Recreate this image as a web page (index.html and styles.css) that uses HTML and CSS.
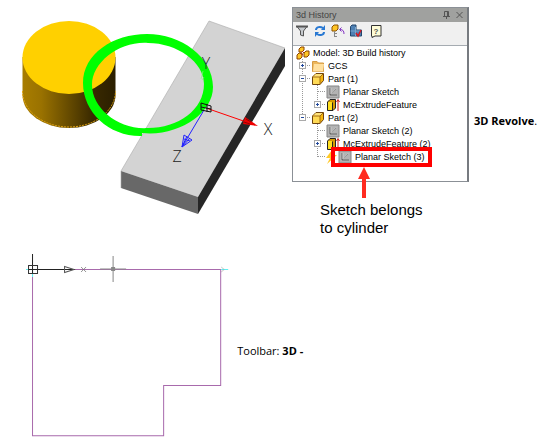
FILE: index.html
```html
<!DOCTYPE html>
<html lang="en">
<head>
    <meta charset="UTF-8">
    <meta name="viewport" content="width=device-width, initial-scale=1.0">
    <title>3D Revolve</title>

    <link rel="stylesheet" href="styles.css">
</head>
<body>
    <!-- shared icons -->
    <svg class="defs" aria-hidden="true">
        <symbol id="icon-part" viewBox="0 0 14 14">
            <path d="M1.500 5 5 1.500H12.500V8.500L9 12.500H1.500Z" fill="#f5b50c" stroke="#6e4310"/>
            <path d="M2 5 5 2H12L9 5Z" fill="#ffe27a"/>
            <path d="M2 5H9V12H2Z" fill="#ffda55"/>
            <path d="M1.500 5H9V12.500M9 5 12.500 1.500" fill="none" stroke="#a36d12"/>
        </symbol>
        <symbol id="icon-sketch" viewBox="0 0 14 14">
            <path d="M1 1H13V13H1Z" fill="#b3b3b3" stroke="#858585"/>
            <path d="M4 3V10H11M4 10 10 4" fill="none" stroke="#666"/>
            <path d="M5 3V9L10 3.500" fill="none" stroke="#ddd" stroke-width=".6"/>
        </symbol>
        <symbol id="icon-extrude" viewBox="0 0 14 14">
            <path d="M1.500 4 4 1.500H9.500V10L7 12.500H1.500Z" fill="#d79b00" stroke="#222"/>
            <path d="M2 4H6V12H2Z" fill="#ffdf20"/>
            <path d="M6.500 4.500V12" stroke="#222"/>
            <path d="M12 13V2M10.500 4 12 1.500 13.500 4" fill="none" stroke="#c22"/>
        </symbol>
    </svg>

    <main>
        <section class="history">
            <svg class="scene" viewBox="0 0 292 220" role="img" aria-label="Cylinder, sketch circle and plate">
                <defs>
                    <linearGradient id="side">
                        <stop offset="0" stop-color="#a87d00"/>
                        <stop offset=".2" stop-color="#9a7200"/>
                        <stop offset=".75" stop-color="#3a2a00"/>
                        <stop offset="1" stop-color="#2b1f00"/>
                    </linearGradient>
                </defs>

                <path d="M22.500 57V95A46.500 33 0 0 0 115.500 95V57Z" fill="url(#side)"/>
                <path d="M22.500 91A46.500 36 0 0 0 115.500 91" fill="none" stroke="#e3a512" stroke-dasharray="2 1"/>
                <ellipse cx="69" cy="57.500" rx="46.500" ry="36.500" fill="#ffd000"/>

                <path d="M209 21 285 48 198 197 121 171Z" fill="#d3d3d3"/>
                <path d="M285 48V66L198 214V197Z" fill="#262626"/>
                <path d="M121 171 198 197V214L121 188Z" fill="#686868"/>
                <path d="M121 188V171L209 21 285 48" fill="none" stroke="#aaa" stroke-width=".6"/>

                <path fill-rule="evenodd" fill="#0f0" d="M147 34C181 34 213 57 213 87C213 112 183 133 150 133.500L142 133V136C110 137 83 113 83 83C83 54 113 34 147 34ZM148 43C120 41 92 62 92 85C92 108 118 130 148 128C178 128 204 110 204 84C204 62 177 43 148 43Z"/>
                <path d="M204 77 202 80M203 71 201 79" stroke="#7ff57f" stroke-width=".7"/>

                <text class="axis" x="206" y="69" text-anchor="middle">Y</text>
                <text class="axis" x="268" y="135" text-anchor="middle">X</text>
                <text class="axis" x="177" y="162" text-anchor="middle">Z</text>

                <path d="M206 108 255 125" stroke="#f00"/>
                <path d="M245 117 258 126 243 124Z" fill="#e00"/>
                <path d="M246 119 251 122M244 122 250 124" stroke="#500" stroke-width=".6"/>
                <path d="M204 110 182 147M182 147 184 135 192 140ZM182 147 187 136M182 147 190 138M184 139 190 141" fill="none" stroke="#22f"/>
                <path d="M201 103 211 106V112L201 110ZM207 104V112M201 107 211 109" fill="none" stroke="#111"/>
            </svg>

            <figure>
                <div class="panel">
                    <header class="titlebar">
                        <h1>3d History</h1>
                        <button class="window-button" aria-label="Pin">
                            <svg viewBox="0 0 7 8"><path d="M1.500 5V.5H5.500V5M4.500 0V5M0 5.500H7M3.500 5V8" fill="none" stroke="#555"/></svg>
                        </button>
                        <button class="window-button" aria-label="Close">
                            <svg viewBox="0 0 7 8"><path d="M.5 1 6.500 7M6.500 1 .5 7" fill="none" stroke="#555"/></svg>
                        </button>
                    </header>

                    <div class="toolbar">
                        <button aria-label="Filter">
                            <svg viewBox="0 0 14 14"><path d="M2 2.500H12L8.500 7V12L5.500 11V7Z" fill="#c5c9cd" stroke="#555"/><path d="M1 2.500H13" stroke="#555" stroke-width="2"/></svg>
                        </button>
                        <button aria-label="Refresh">
                            <svg viewBox="0 0 14 14"><path d="M3 6C3 3 7 2 10 4M11 8C11 11 7 12 4 10" fill="none" stroke="#2878d2" stroke-width="2"/><path d="M8 6H12V1ZM6 8H2V13Z" fill="#2878d2"/></svg>
                        </button>
                        <button aria-label="Roll back">
                            <svg viewBox="0 0 14 14"><path d="M1 3 3 1H7V5L5 7H1Z" fill="#ffc526" stroke="#8c5200"/><path d="M3.500 7V13M3.500 9.500H6M3.500 12.500H6" fill="none" stroke="#888"/><path d="M13 10C13 7 12 5.500 9 5.500M10.500 3.500 8.500 5.500 10.500 7.500" fill="none" stroke="#8434c4"/></svg>
                        </button>
                        <button aria-label="Rebuild">
                            <svg viewBox="0 0 14 14"><path d="M1.500 2.500 3 1H7V6H12.500V12H1.500Z" fill="#4f81b4" stroke="#23466d"/><path d="M1.500 7H12M6.500 3V12" stroke="#7ba7cf"/><path d="M7 9 9 12 12 6" fill="none" stroke="#d71920" stroke-width="1.500"/></svg>
                        </button>
                        <button class="help" aria-label="Help">
                            <svg viewBox="0 0 14 14"><path d="M2.500 1.500H12V12H6L3 13.500V12H2.500Z" fill="#fffdd7" stroke="#333"/><text class="question" x="7" y="10" text-anchor="middle">?</text></svg>
                        </button>
                    </div>

                    <div class="tree">
                        <div class="row">
                            <svg class="icon" viewBox="0 0 14 14"><path d="M3 3 5 1H8V4L6 6H3ZM1 9 3 7H6V11L4 13H1ZM8 7 10 5H13V9L11 11H8Z" fill="#ffc727" stroke="#8b4200"/><path d="M6 5 8 7M4 7 7 9" stroke="#b32b16"/></svg>
                            <span>Model: 3D Build history</span>
                        </div>
                        <ul class="branches">
                            <li>
                                <div class="row">
                                    <span class="branch"><button class="toggle plus" aria-label="Expand GCS"></button></span>
                                    <svg class="icon" viewBox="0 0 14 14"><path d="M1.500 2.500H6L7.500 4H12.500V12.500H1.500Z" fill="#edb75c" stroke="#d59a42"/><path d="M3 5H13L12 12.500H2Z" fill="#ffe0a0"/></svg>
                                    <span>GCS</span>
                                </div>
                            </li>
                            <li>
                                <div class="row">
                                    <span class="branch"><button class="toggle" aria-label="Collapse Part (1)"></button></span>
                                    <svg class="icon"><use href="#icon-part"/></svg>
                                    <span>Part (1)</span>
                                </div>
                                <ul>
                                    <li class="row">
                                        <span class="branch leaf"></span>
                                        <svg class="icon"><use href="#icon-sketch"/></svg>
                                        <span>Planar Sketch</span>
                                    </li>
                                    <li class="row">
                                        <span class="branch"><button class="toggle plus" aria-label="Expand McExtrudeFeature"></button></span>
                                        <svg class="icon"><use href="#icon-extrude"/></svg>
                                        <span>McExtrudeFeature</span>
                                    </li>
                                </ul>
                            </li>
                            <li>
                                <div class="row">
                                    <span class="branch"><button class="toggle" aria-label="Collapse Part (2)"></button></span>
                                    <svg class="icon"><use href="#icon-part"/></svg>
                                    <span>Part (2)</span>
                                </div>
                                <ul>
                                    <li class="row">
                                        <span class="branch leaf"></span>
                                        <svg class="icon"><use href="#icon-sketch"/></svg>
                                        <span>Planar Sketch (2)</span>
                                    </li>
                                    <li class="row">
                                        <span class="branch"><button class="toggle plus" aria-label="Expand McExtrudeFeature (2)"></button></span>
                                        <svg class="icon"><use href="#icon-extrude"/></svg>
                                        <span>McExtrudeFeature (2)</span>
                                    </li>
                                    <li class="row">
                                        <span class="branch leaf"></span>
                                        <svg class="bolt" viewBox="0 0 12 14"><path d="M6 0 0 8H4L1 14 11 5H7L10 0Z" fill="#ffc928"/></svg>
                                        <span class="marked">
                                            <svg class="icon"><use href="#icon-sketch"/></svg>
                                            <span>Planar Sketch (3)</span>
                                            <svg class="arrow" viewBox="0 0 12 31"><path d="M6 0 12 12H8V31H4V12H0Z" fill="#ff2b20"/></svg>
                                        </span>
                                    </li>
                                </ul>
                            </li>
                        </ul>
                    </div>
                </div>
                <figcaption>Sketch belongs<br>to cylinder</figcaption>
            </figure>

            <p class="command"><b>3D Revolve</b>.</p>
        </section>

        <section class="profile">
            <svg class="sketch" viewBox="0 0 235 187" role="img" aria-label="Profile sketch">
                <path d="M32.500 15.500H220.500V131.500H163.500V181.500H32.500Z" fill="none" stroke="#a86aac"/>
                <path d="M26 15.500H33M32.500 15V23M221 15.500H228" stroke="#5ff0f0"/>
                <path d="M32.500 0V19M28 15.500H75" stroke="#222"/>
                <path d="M28.500 11.500H37.500V19.500H28.500Z" fill="none" stroke="#333"/>
                <path d="M64.500 12.500 74 15.500 64.500 18.500Z" fill="none" stroke="#555"/>
                <path d="M81 13 86 18M86 13 81 18" stroke="#777" stroke-width=".8"/>
                <path d="M113 2V28M100 15H126" stroke="#888"/>
                <path d="M111 13H115V17H111Z" fill="#888"/>
                <path d="M221 13 224 15.500 221 18" fill="none" stroke="#aaa" stroke-width=".7"/>
            </svg>
            <p>Toolbar: <b>3D -</b></p>
        </section>
    </main>
</body>
</html>
```

FILE: styles.css
```css
* {
    box-sizing: border-box;
}

body {
    margin: 0;
    background: #fff;
    color: #000;
    font-family: "Open Sans", sans-serif;
    font-size: 11px;
}

h1, p, ul, figure {
    margin: 0;
    padding: 0;
}

ul {
    list-style: none;
}

button {
    padding: 0;
    border: 0;
    background: transparent;
    font: inherit;
}

svg {
    display: block;
    flex-shrink: 0;
}

.defs {
    display: none;
}

.history {
    display: flex;
    align-items: flex-start;
}

.scene {
    flex: 1;
    min-width: 0;
}

.axis {
    font: 300 16px "Open Sans", sans-serif;
    fill: #222;
}

figure {
    width: 177px;
    padding-top: 7px;
}

figcaption {
    padding: 19px 0 17px 28px;
    font: 15px/18px "Liberation Sans", sans-serif;
}

.command {
    width: 78px;
    padding: 113px 0 0 5px;
    line-height: 16px;
    white-space: nowrap;
}

.panel {
    border: 1px solid #8b9096;
    border-right: 2px solid #777b80;
    background: #fff;
    font-family: "Liberation Sans", sans-serif;
    font-size: 9px;
}

.titlebar {
    display: flex;
    align-items: center;
    gap: 6px;
    height: 14px;
    padding: 0 4px 0 3px;
    background: #a0a19f;
    color: #444;
}

.titlebar h1 {
    flex: 1;
    font-size: 9px;
    font-weight: normal;
}

.window-button svg {
    width: 7px;
    height: 8px;
}

.toolbar {
    display: flex;
    align-items: flex-start;
    gap: 4px;
    height: 24px;
    padding: 2px;
    border-bottom: 1px solid #a5abb1;
    background: #f0f0f0;
}

.toolbar svg {
    width: 14px;
    height: 14px;
}

.help {
    margin-left: 2px;
}

.question {
    font: bold 8px "Liberation Sans", sans-serif;
    fill: #555;
}

.tree {
    padding: 0 0 18px 3px;
}

.row {
    display: flex;
    align-items: center;
    gap: 3px;
    height: 13px;
    white-space: nowrap;
}

.icon {
    width: 14px;
    height: 14px;
}

.branches {
    padding-left: 2px;
    background: repeating-linear-gradient(#999 0 1px, transparent 1px 2px) 6px 0 / 1px 58px no-repeat;
}

.branches ul {
    padding-left: 15px;
    background: repeating-linear-gradient(#999 0 1px, transparent 1px 2px) 19px 0 / 1px calc(100% - 6px) no-repeat;
}

.branch {
    width: 13px;
    margin-right: -3px;
    background: repeating-linear-gradient(90deg, #999 0 1px, transparent 1px 2px) 5px 50% / 8px 1px no-repeat;
}

.leaf {
    height: 1px;
}

.toggle {
    display: block;
    width: 7px;
    height: 7px;
    margin-left: 1px;
    border: 1px solid #aaa;
    background: linear-gradient(#234a9c, #234a9c) center / 3px 1px no-repeat #fff;
}

.plus {
    background:
        linear-gradient(#234a9c, #234a9c) center / 3px 1px no-repeat,
        linear-gradient(#234a9c, #234a9c) center / 1px 3px no-repeat,
        #fff;
}

.bolt {
    width: 12px;
    height: 14px;
}

.marked {
    position: relative;
    display: flex;
    align-items: center;
    gap: 3px;
    margin-left: -3px;
}

.marked::after {
    content: "";
    position: absolute;
    inset: -3px -7px;
    border: 4px solid #f00;
}

.arrow {
    position: absolute;
    top: 17px;
    left: 20px;
    width: 12px;
    height: 31px;
}

.profile {
    display: flex;
    align-items: center;
    gap: 2px;
}

.sketch {
    width: 43%;
}

.profile p {
    padding-top: 5px;
}
```
